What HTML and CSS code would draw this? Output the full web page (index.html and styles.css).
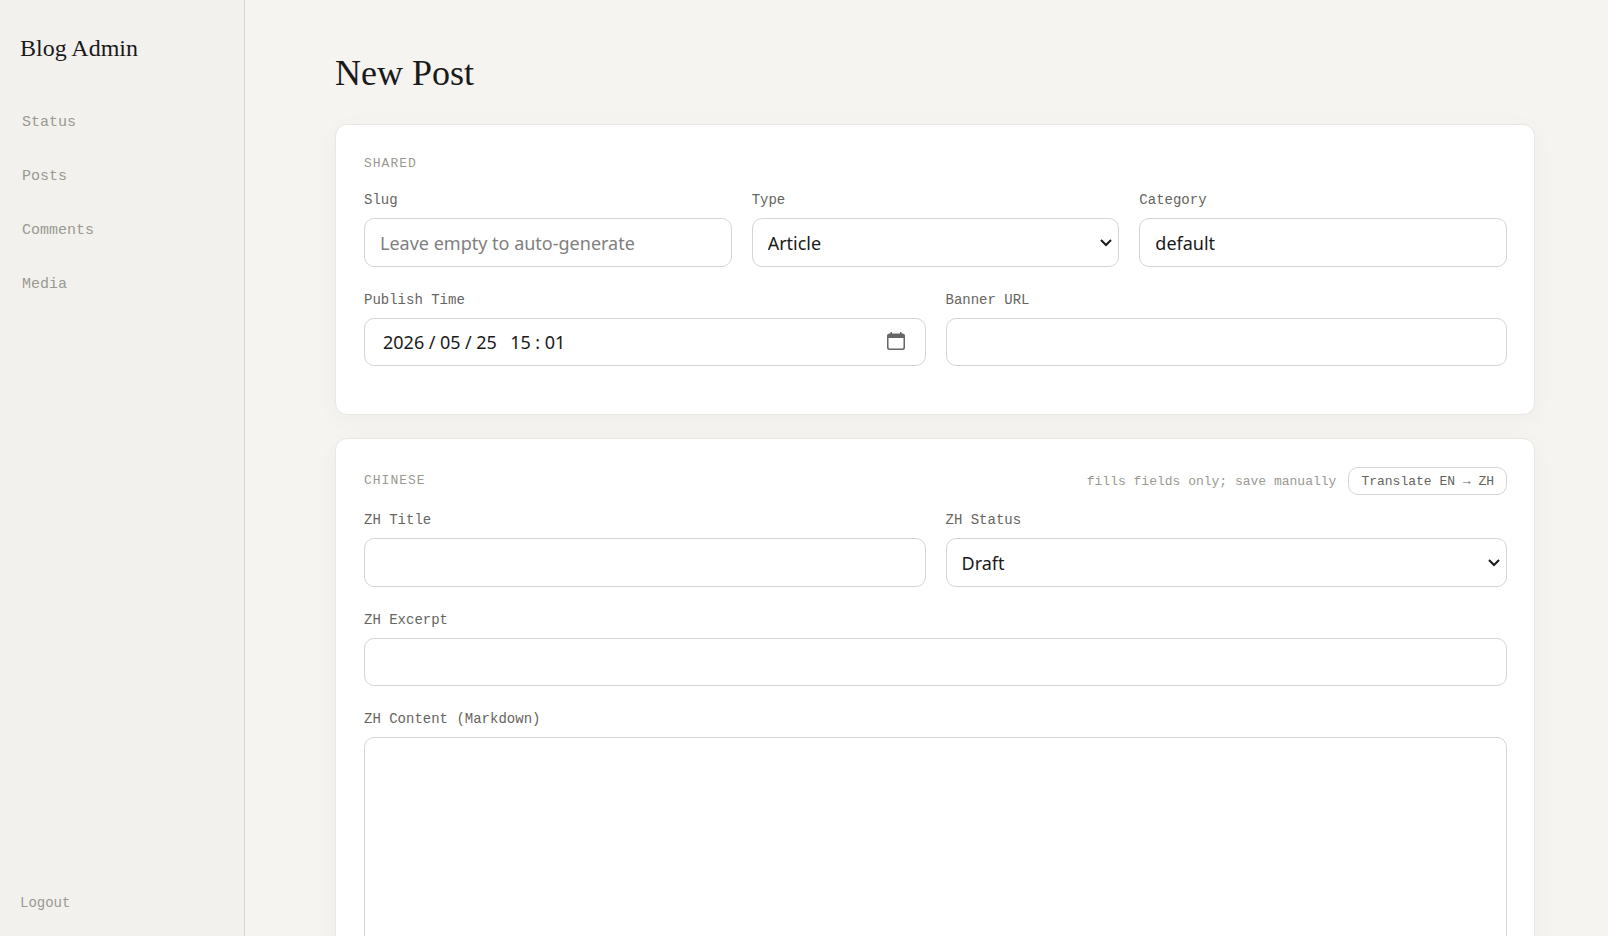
FILE: index.html
```html
<!DOCTYPE html>
<html lang="en">
<head>
  <meta charset="UTF-8">
  <meta name="viewport" content="width=device-width, initial-scale=1.0">
  <title>New Post - Blog Admin</title>
  <link rel="stylesheet" href="styles.css">
</head>
<body>
  <aside class="sidebar">
    <a class="brand" href="#">Blog Admin</a>
    <nav>
      <a href="#status">Status</a>
      <a href="#posts">Posts</a>
      <a href="#comments">Comments</a>
      <a href="#media">Media</a>
    </nav>
    <button class="logout" type="button">Logout</button>
  </aside>
  <main>
    <h1>New Post</h1>
    <form>
      <section class="card">
        <div class="card-head">
          <h2>Shared</h2>
        </div>
        <div class="row row-3">
          <div class="field">
            <label for="slug">Slug</label>
            <input id="slug" type="text" placeholder="Leave empty to auto-generate">
          </div>
          <div class="field">
            <label for="type">Type</label>
            <select id="type">
              <option>Article</option>
              <option>Note</option>
            </select>
          </div>
          <div class="field">
            <label for="category">Category</label>
            <input id="category" type="text" value="default">
          </div>
        </div>
        <div class="row">
          <div class="field">
            <label for="publish-time">Publish Time</label>
            <div class="date">
              <input id="publish-time" type="text" value="2026&#8197;/&#8197;05&#8197;/&#8197;25&ensp;&#8197;15&#8197;:&#8197;01">
              <button type="button" aria-label="Pick a date">
                <svg width="18" height="18" viewBox="0 0 18 18" fill="#666">
                  <path fill-rule="evenodd" d="M3.500 0h1.500v1.500h8V0h1.500v1.500H15.500A2.500 2.500 0 0 1 18 4v11.500a2.500 2.500 0 0 1-2.500 2.500h-13A2.500 2.500 0 0 1 0 15.500V4a2.500 2.500 0 0 1 2.500-2.500h1zM1.500 6v9a1.500 1.500 0 0 0 1.500 1.500h12a1.500 1.500 0 0 0 1.500-1.500V6z"/>
                </svg>
              </button>
            </div>
          </div>
          <div class="field">
            <label for="banner">Banner URL</label>
            <input id="banner" type="text">
          </div>
        </div>
      </section>

      <section class="card">
        <div class="card-head">
          <h2>Chinese</h2>
          <span class="hint">fills fields only; save manually</span>
          <button class="translate" type="button">Translate EN → ZH</button>
        </div>
        <div class="row">
          <div class="field">
            <label for="zh-title">ZH Title</label>
            <input id="zh-title" type="text">
          </div>
          <div class="field">
            <label for="zh-status">ZH Status</label>
            <select id="zh-status">
              <option>Draft</option>
              <option>Published</option>
            </select>
          </div>
        </div>
        <div class="field">
          <label for="zh-excerpt">ZH Excerpt</label>
          <input id="zh-excerpt" type="text">
        </div>
        <div class="field">
          <label for="zh-content">ZH Content (Markdown)</label>
          <textarea id="zh-content" rows="16"></textarea>
        </div>
      </section>
    </form>
  </main>
</body>
</html>
```
FILE: styles.css
```css
:root {
  --ink: #1a1a1a;
  --text: #666560;
  --muted: #9a9992;
  --line: #d4d4d2;
  --mono: "Liberation Mono", monospace;
  --serif: "Liberation Serif", serif;
  --sans: "Noto Sans", "Noto Sans CJK SC", sans-serif;
}
*, ::before, ::after {
  box-sizing: border-box;
}
body {
  display: flex;
  align-items: flex-start;
  min-height: 100vh;
  margin: 0;
  font-family: var(--mono);
  color: var(--ink);
  background: #f5f4f0;
}
h1, h2 {
  margin: 0;
  font-weight: 400;
}
button {
  font-family: var(--mono);
  cursor: pointer;
}

/* sidebar */
.sidebar {
  position: sticky;
  top: 0;
  display: flex;
  flex-direction: column;
  flex: 0 0 245px;
  height: 100vh;
  padding: 32px 20px 21px;
  background: #f2f1ed;
  border-right: 1px solid var(--line);
}
.brand {
  margin-bottom: 32px;
  font-family: var(--serif);
  font-size: 24px;
  line-height: 32px;
  color: var(--ink);
  text-decoration: none;
}
nav a {
  display: block;
  padding: 0 2px;
  font-size: 15px;
  line-height: 54px;
  color: var(--muted);
  text-decoration: none;
}
.logout {
  align-self: flex-start;
  margin-top: auto;
  padding: 0;
  font-size: 14px;
  line-height: 24px;
  color: var(--muted);
  background: none;
  border: 0;
}

/* content */
main {
  flex: 1;
  min-width: 0;
  padding: 51px 73px 51px 90px;
}
h1 {
  margin-bottom: 29px;
  font-family: var(--serif);
  font-size: 36px;
  line-height: 44px;
}
.card {
  margin-bottom: 23px;
  padding: 28px 27px 28px 28px;
  background: #fff;
  border: 1px solid #e8e7e3;
  border-radius: 12px;
  box-shadow: 0 4px 24px rgba(0, 0, 0, .03);
}
.card-head {
  display: flex;
  align-items: center;
  gap: 12px;
  margin-bottom: 12px;
}
h2 {
  flex: 1;
  font-size: 13px;
  line-height: 22px;
  letter-spacing: 1px;
  text-transform: uppercase;
  color: var(--muted);
}
.hint {
  font-size: 13px;
  color: var(--muted);
}
.translate {
  height: 28px;
  padding: 0 12px;
  font-size: 13px;
  color: var(--text);
  background: #fff;
  border: 1px solid var(--line);
  border-radius: 10px;
}

/* fields */
.row {
  display: grid;
  grid-template-columns: repeat(2, 1fr);
  column-gap: 20px;
}
.row-3 {
  grid-template-columns: repeat(3, 1fr);
}
.field {
  display: flex;
  flex-direction: column;
  margin-bottom: 20px;
}
label {
  margin-bottom: 4px;
  font-size: 14px;
  line-height: 27px;
  color: var(--text);
}
input, select, textarea {
  flex: 1 0 auto;
  width: 100%;
  min-height: 48px;
  padding: 0 15px;
  font-family: var(--sans);
  font-size: 18px;
  color: var(--ink);
  background: #fff;
  border: 1px solid var(--line);
  border-radius: 10px;
}
select {
  height: 49px;
  appearance: none;
  background: #fff url("data:image/svg+xml,%3Csvg xmlns='http://www.w3.org/2000/svg' width='12' height='8' fill='none' stroke='%231a1a1a' stroke-width='2'%3E%3Cpath d='M1 1l5 5 5-5'/%3E%3C/svg%3E") no-repeat right 6px center;
}
textarea {
  display: block;
  padding: 10px 14px;
  resize: vertical;
}
input::placeholder {
  color: #808080;
}
.date {
  position: relative;
}
.date input {
  padding: 0 60px 0 18px;
}
.date button {
  position: absolute;
  top: 14px;
  right: 21px;
  display: flex;
  padding: 0;
  background: none;
  border: 0;
}
```
